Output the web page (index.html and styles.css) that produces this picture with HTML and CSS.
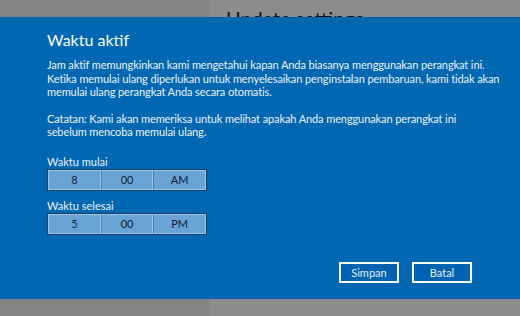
FILE: index.html
```html
<!DOCTYPE html>
<html lang="id">
<head>
    <meta charset="utf-8"/>
    <title>Waktu aktif</title>
    <link rel="stylesheet" href="styles.css">
</head>
<body>
    <div class="backdrop">
        <div class="nav-pane"></div>
        <div class="content-pane">
            <h1>Update settings</h1>
        </div>
    </div>

    <div class="dialog">
        <h2>Waktu aktif</h2>
        <p>Jam aktif memungkinkan kami mengetahui kapan Anda biasanya menggunakan perangkat ini.<br>
        Ketika memulai ulang diperlukan untuk menyelesaikan penginstalan pembaruan, kami tidak akan<br>
        memulai ulang perangkat Anda secara otomatis.</p>
        <p>Catatan: Kami akan memeriksa untuk melihat apakah Anda menggunakan perangkat ini<br>
        sebelum mencoba memulai ulang.</p>

        <div class="time-field first">
            <label>Waktu mulai</label>
            <div class="picker">
                <span>8</span><span>00</span><span>AM</span>
            </div>
        </div>
        <div class="time-field">
            <label>Waktu selesai</label>
            <div class="picker">
                <span>5</span><span>00</span><span>PM</span>
            </div>
        </div>

        <div class="actions">
            <button>Simpan</button>
            <button>Batal</button>
        </div>
    </div>
</body>
</html>
```

FILE: styles.css
```css
body {
    margin: 0;
    width: 520px;
    height: 316px;
    overflow: hidden;
    position: relative;
    font-family: Lato, "Noto Sans", sans-serif;
}

.backdrop {
    display: flex;
    height: 316px;
}

.nav-pane {
    width: 210px;
    background-color: #858585;
}

.content-pane {
    flex: 1;
    background-color: #8c8c8c;
    padding-left: 16px;
}

.content-pane h1 {
    margin: 6px 0 0;
    font-size: 20px;
    font-weight: 400;
    color: #111;
}

.dialog {
    position: absolute;
    top: 17px;
    left: 0;
    right: 0;
    height: 282px;
    box-sizing: border-box;
    background-color: #0067b3;
    color: #eef3f8;
    padding: 0 0 0 47px;
}

.dialog h2 {
    margin: 11px 0 0;
    font-size: 16px;
    font-weight: 400;
    line-height: 24px;
    color: #ffffff;
}

.dialog p {
    margin: 6px 0 0;
    font-size: 11px;
    line-height: 13.5px;
    letter-spacing: -0.1px;
    white-space: nowrap;
}

.dialog p + p {
    margin-top: 13px;
}

.time-field {
    margin-top: 8px;
}

.time-field.first {
    margin-top: 16px;
}

.time-field label {
    display: block;
    font-size: 11px;
    line-height: 14px;
}

.picker {
    display: flex;
    width: 160px;
    height: 22px;
    box-sizing: border-box;
    border: 1px solid #1c3f68;
    background-color: #6aa4d6;
}

.picker span {
    flex: 1;
    display: flex;
    align-items: center;
    justify-content: center;
    font-size: 11px;
    color: #0e2238;
    border: 1px solid #9cc4e6;
}

.picker span + span {
    border-left: 1px solid #4d7eaa;
}

.actions {
    position: absolute;
    right: 48px;
    bottom: 16px;
    display: flex;
    gap: 13px;
}

.actions button {
    width: 60px;
    height: 21px;
    box-sizing: border-box;
    border: 2px solid #ffffff;
    background-color: #0063b1;
    color: #e6eef6;
    font-family: inherit;
    font-size: 11px;
    padding: 0;
}
```
